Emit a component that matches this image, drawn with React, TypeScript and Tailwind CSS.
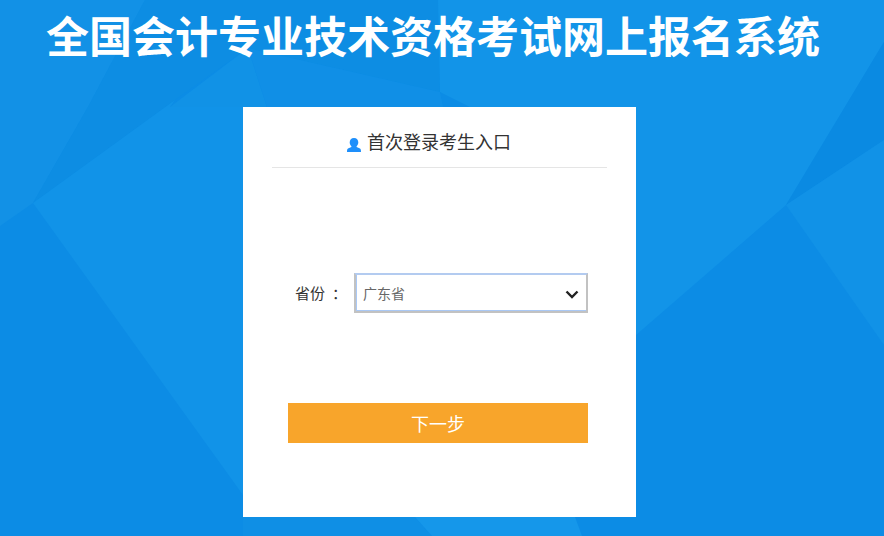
const cjk = "font-['Microsoft_YaHei','Noto_Sans_CJK_SC',sans-serif]";

// low-poly facets behind the page
function PolyBackground() {
  return (
    <svg className="absolute inset-0 h-full w-full" viewBox="0 0 884 536" preserveAspectRatio="none">
      <rect width="884" height="536" fill="#0c8ce5" />
      <polygon points="0,0 145,0 113,60 88,107 33,203 0,226" fill="#1291e6" />
      <polygon points="145,0 438,0 440,92 248,48 175,100 33,203 88,107 113,60" fill="#0d8de3" />
      <polygon points="33,203 175,100 170,107 243,107 243,495" fill="#1193e8" />
      <polygon points="248,48 267,107 170,107" fill="#1192e6" />
      <polygon points="248,48 440,92 443,107 267,107" fill="#108fe6" />
      <polygon points="438,0 884,0 884,42 786,205 636,335 636,107 470,107 440,92" fill="#1294e8" />
      <polygon points="786,205 884,42 884,140" fill="#0a8ae2" />
      <polygon points="786,205 884,140 884,345" fill="#1192e7" />
      <polygon points="243,517 415,517 432,536 243,536" fill="#0f8fe5" />
      <polygon points="415,517 575,517 582,536 432,536" fill="#1597ea" />
    </svg>
  );
}

export default function App() {
  return (
    <div className={`relative h-[536px] w-[884px] overflow-hidden ${cjk}`}>
      <PolyBackground />
      <div className="relative flex flex-col">
        <h1 className="ml-[46px] h-[107px] w-[790px] pt-[8px] text-[43px] leading-[52px] font-bold whitespace-nowrap text-white">
          全国会计专业技术资格考试网上报名系统
        </h1>
        <div className="ml-[243px] flex h-[410px] w-[393px] flex-col bg-white">
          <div className="mx-[29px] flex h-[61px] items-end justify-center gap-[6px] border-b border-[#e5e5e5] pr-[21px] pb-[13px]">
            <svg width="14" height="14" viewBox="0 0 14 14" className="mb-[2px]">
              <path
                d="M7 0C4.200 0 2.700 1.900 2.700 4.400c0 1.500.7 2.900 1.700 3.800v.9L1 10.500C.3 10.900 0 11.800 0 14h14c0-2.200-.3-3.100-1-3.500L9.600 9.100v-.9c1-.9 1.700-2.300 1.700-3.800C11.300 1.900 9.800 0 7 0z"
                fill="#1e8ffb"
              />
            </svg>
            <span className="text-[18px] leading-[26px] text-[#333]">首次登录考生入口</span>
          </div>
          <div className="mt-[105px] flex items-center pl-[52px]">
            <label className="w-[59px] text-[15px] text-[#333]">
              省份<span className="ml-[7px]">：</span>
            </label>
            <div className="relative h-[40px] w-[234px]">
              <select
                defaultValue="广东省"
                className="h-full w-full appearance-none border-2 border-[#c2c2c2] border-t-[#b3cbf0] bg-white pl-[7px] text-[14px] text-[#666] shadow-[inset_1px_0_0_#a9c8f5,inset_0_-1px_0_#a9c8f5] outline-none"
              >
                <option>广东省</option>
              </select>
              <svg
                width="14"
                height="9"
                viewBox="0 0 14 9"
                className="pointer-events-none absolute top-[17px] right-[9px]"
              >
                <path d="M1.500 1.500 7 7l5.500-5.500" fill="none" stroke="#222" strokeWidth="2.400" />
              </svg>
            </div>
          </div>
          <button className="mt-[90px] ml-[45px] h-[40px] w-[300px] bg-[#f8a52b] text-[18px] text-white">
            下一步
          </button>
        </div>
      </div>
    </div>
  );
}
